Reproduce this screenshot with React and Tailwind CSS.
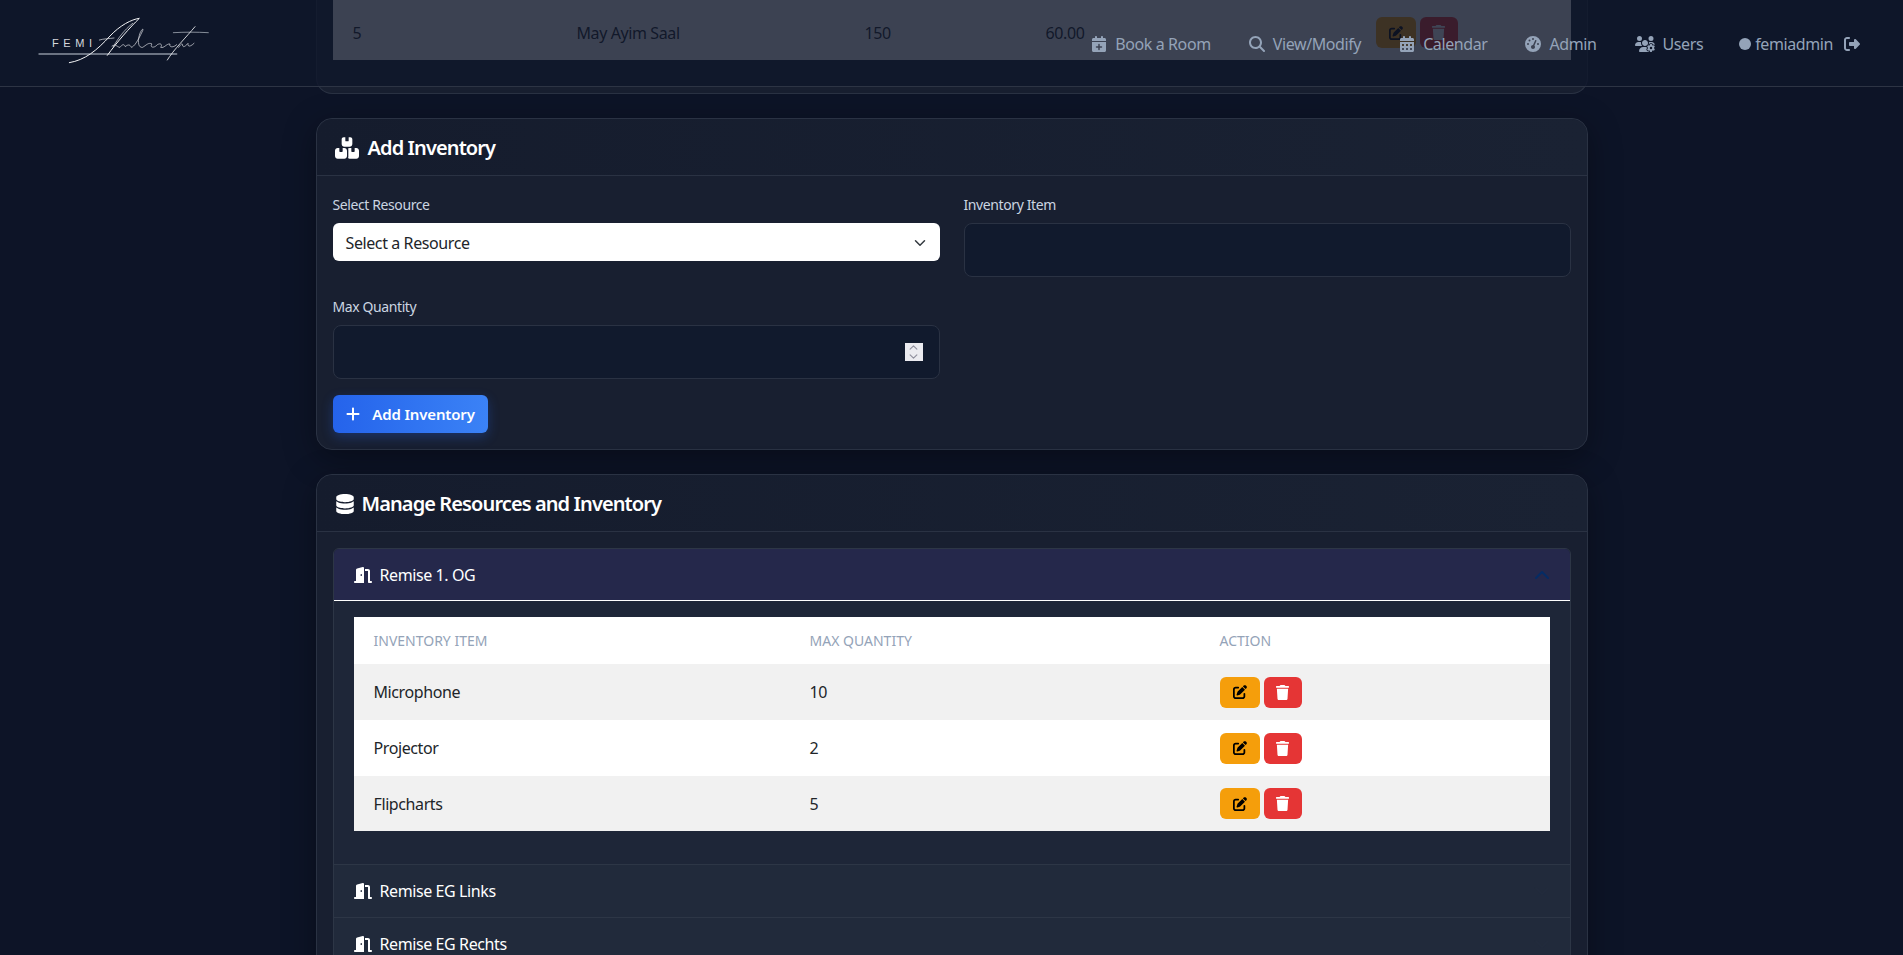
import { FaBoxesStacked, FaCalendarDays, FaCalendarPlus, FaCircle, FaDatabase, FaDoorOpen, FaGaugeHigh, FaMagnifyingGlass, FaPenToSquare, FaPlus, FaRightFromBracket, FaTrash, FaUsersGear } from "react-icons/fa6";

const inventory = [
    { name: "Microphone", max: "10", row: "h-[56px] bg-[#f1f1f1]" },
    { name: "Projector", max: "2", row: "h-[56px] bg-white" },
    { name: "Flipcharts", max: "5", row: "h-[55px] bg-[#f1f1f1]" },
];

const navLinks = [
    { icon: FaCalendarPlus, label: "Book a Room", size: "text-base" },
    { icon: FaMagnifyingGlass, label: "View/Modify", size: "text-base" },
    { icon: FaCalendarDays, label: "Calendar", size: "text-base" },
    { icon: FaGaugeHigh, label: "Admin", size: "text-base" },
    { icon: FaUsersGear, label: "Users", size: "text-[20px]" },
];

function Chevron({ up, className }) {
    return (
        <svg viewBox="0 0 16 16" className={className} fill="none" stroke="currentColor" strokeWidth="2" strokeLinecap="round" strokeLinejoin="round">
            <path d={up ? "M2 11l6-6 6 6" : "M2 5l6 6 6-6"} />
        </svg>
    );
}

function Logo() {
    return (
        <div className="relative w-[190px] h-[60px] mb-[7px] ml-[11px]">
            <span className="absolute left-[22px] top-[26px] text-[11px] leading-[14px] tracking-[0.42em] text-[#d5d8de] font-['Liberation_Sans',sans-serif]">FEMI</span>
            <svg viewBox="0 0 570 180" className="absolute inset-0 w-full h-full" fill="none" strokeLinecap="round" strokeLinejoin="round">
                <path d="M27 132H440" stroke="#8b92a0" strokeWidth="4" />
                <path d="M118 158C165 150 200 122 240 78C270 46 305 28 328 25C300 52 262 95 232 136" stroke="#f3f4f6" strokeWidth="3" />
                <path d="M308 40C282 60 262 88 250 110M208 90C222 86 238 86 252 84" stroke="#e5e7eb" strokeWidth="2" />
                <path d="M246 108C258 100 262 112 270 112C276 104 282 100 286 110C292 104 300 102 304 112C312 110 322 96 338 62C342 52 332 60 328 76C322 98 326 114 338 112C348 106 356 96 366 102C358 112 372 116 382 104C392 98 398 104 392 112C402 116 410 100 420 102C416 112 430 114 440 104" stroke="#e5e7eb" strokeWidth="2" />
                <path d="M430 68C465 66 500 66 535 68" stroke="#9ca3af" strokeWidth="2.5" />
                <path d="M495 50C470 80 430 120 412 150" stroke="#f3f4f6" strokeWidth="2.5" />
                <path d="M446 112C454 100 458 98 458 108C462 114 470 104 474 100C472 110 480 112 492 100" stroke="#e5e7eb" strokeWidth="2" />
            </svg>
        </div>
    );
}

function ActionButtons() {
    return (
        <div className="flex gap-1">
            <button className="w-10 h-[31px] rounded-md bg-[#f59e0b] flex items-center justify-center text-black">
                <FaPenToSquare className="text-[14px]" />
            </button>
            <button className="w-[38px] h-[31px] rounded-md bg-[#e53535] flex items-center justify-center text-white">
                <FaTrash className="text-[15px]" />
            </button>
        </div>
    );
}

function Card({ icon: Icon, title, iconClass, children }) {
    return (
        <section className="rounded-2xl border border-[#2a3243] bg-[#181f30] shadow-[0_8px_32px_rgba(0,0,0,0.35)]">
            <div className="h-[57px] flex items-center gap-[8px] pl-[18px] pt-[1px] border-b border-[#2a3243] bg-gradient-to-r from-[#151c2d] to-[#1a2233] rounded-t-2xl">
                <Icon className={iconClass} />
                <h2 className="text-xl font-semibold tracking-[-0.045em] text-white">{title}</h2>
            </div>
            {children}
        </section>
    );
}

function AccordionRow({ name }) {
    return (
        <div className="h-[53px] flex items-center justify-between px-5 bg-[#212a3b] border-t border-[#2d3646] text-white">
            <span className="flex items-center gap-2">
                <FaDoorOpen className="text-[18px]" />
                {name}
            </span>
            <Chevron className="w-4 h-4 text-[#222b3c]" />
        </div>
    );
}

export default function App() {
    return (
        <div className="relative h-[955px] overflow-hidden bg-[#0d1427] font-['Noto_Sans',sans-serif] tracking-[-0.025em]">
            <nav className="absolute top-0 left-0 right-0 h-[87px] z-10 flex items-center justify-between pl-[19px] pr-[43px] border-b border-[#2d3444] bg-[#0f172a]/80">
                <Logo />
                <div className="flex items-center gap-[38px] pt-[1px] text-[#94a3b8]">
                    {navLinks.map(({ icon: Icon, label, size }) => (
                        <a key={label} className="flex items-center gap-2">
                            <Icon className={size} />
                            {label}
                        </a>
                    ))}
                    <span className="flex items-center -ml-[2px]">
                        <FaCircle className="text-[12px] mr-1" />
                        femiadmin
                        <FaRightFromBracket className="text-base ml-[11px]" />
                    </span>
                </div>
            </nav>

            <main className="w-[1272px] mx-auto flex flex-col gap-6">
                <section className="h-[94px] px-4 rounded-b-2xl border border-t-0 border-[#2a3243] bg-[#181f30]">
                    <div className="h-[60px] bg-[#f1f1f1] grid grid-cols-[224px_288px_181px_330px_1fr] items-center pl-5 pt-[5px] text-[#212529]">
                        <span>5</span>
                        <span>May Ayim Saal</span>
                        <span>150</span>
                        <span>60.00</span>
                        <ActionButtons />
                    </div>
                </section>

                <Card icon={FaBoxesStacked} title="Add Inventory" iconClass="text-[24px] mr-px text-white">
                    <div className="p-4 pt-[19px]">
                        <div className="grid grid-cols-2 gap-x-6">
                            <div>
                                <label className="block text-sm leading-5 mb-2 text-[#cbd5e1]">Select Resource</label>
                                <div className="h-[38px] rounded-md bg-white flex items-center justify-between pl-[13px] pr-3 pt-px text-[#212529]">
                                    Select a Resource
                                    <Chevron className="w-3 h-3 text-[#343a40] mr-[2px]" />
                                </div>
                            </div>
                            <div>
                                <label className="block text-sm leading-5 mb-2 text-[#cbd5e1]">Inventory Item</label>
                                <input className="block w-full h-[54px] rounded-lg border border-[#2a3243] bg-[#111a2d]" />
                            </div>
                            <div className="mt-[20px]">
                                <label className="block text-sm leading-5 mb-2 text-[#cbd5e1]">Max Quantity</label>
                                <div className="h-[54px] rounded-lg border border-[#2a3243] bg-[#111a2d] flex items-center justify-end pr-4">
                                    <div className="w-[18px] h-[18px] bg-[#ebebf0] flex flex-col items-center justify-center text-[#8f8f9d]">
                                        <Chevron up className="w-[9px] h-[9px]" />
                                        <Chevron className="w-[9px] h-[9px]" />
                                    </div>
                                </div>
                            </div>
                        </div>
                        <button className="mt-4 h-[38px] w-[155px] rounded-md bg-gradient-to-r from-[#2563eb] to-[#3b82f6] shadow-[0_4px_12px_rgba(37,99,235,0.3)] text-white font-semibold text-[15px] tracking-[-0.01em] flex items-center justify-center gap-[11px]">
                            <FaPlus className="text-base" />
                            Add Inventory
                        </button>
                    </div>
                </Card>

                <Card icon={FaDatabase} title="Manage Resources and Inventory" iconClass="text-[20px] -mr-px text-white">
                    <div className="p-4">
                        <div className="rounded-md border border-[#2d3646] overflow-hidden">
                            <div className="h-[52px] flex items-center justify-between px-5 bg-[#25284b] border-b border-white text-white">
                                <span className="flex items-center gap-2">
                                    <FaDoorOpen className="text-[18px]" />
                                    Remise 1. OG
                                </span>
                                <Chevron up className="w-4 h-4 text-[#052c65]" />
                            </div>
                            <div className="bg-[#1e2638] pt-4 px-5 pb-[33px]">
                                <table className="w-full bg-white table-fixed">
                                    <thead>
                                        <tr className="h-[47px] text-left text-sm tracking-normal text-[#94a3b8]">
                                            <th className="font-normal pl-5 w-[456px]">INVENTORY ITEM</th>
                                            <th className="font-normal w-[410px]">MAX QUANTITY</th>
                                            <th className="font-normal">ACTION</th>
                                        </tr>
                                    </thead>
                                    <tbody className="text-[#212529]">
                                        {inventory.map((item) => (
                                            <tr key={item.name} className={item.row}>
                                                <td className="pl-5">{item.name}</td>
                                                <td>{item.max}</td>
                                                <td><ActionButtons /></td>
                                            </tr>
                                        ))}
                                    </tbody>
                                </table>
                            </div>
                            <AccordionRow name="Remise EG Links" />
                            <AccordionRow name="Remise EG Rechts" />
                        </div>
                    </div>
                </Card>
            </main>
        </div>
    );
}
